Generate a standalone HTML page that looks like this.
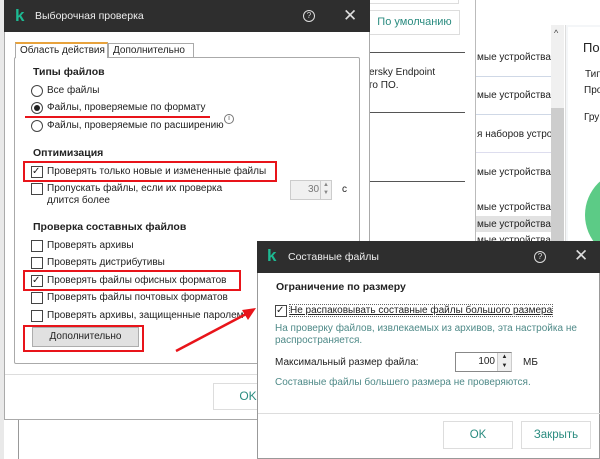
<!DOCTYPE html>
<html><head><meta charset="utf-8"><style>
*{box-sizing:border-box;margin:0;padding:0}
body{width:600px;height:459px;overflow:hidden;position:relative;background:#fff;font-family:"Liberation Sans","DejaVu Sans",sans-serif;font-size:10px;color:#222}
.a{position:absolute;white-space:nowrap}
.dark{background:#2e2e2e}
.cb{position:absolute;width:12px;height:12px;border:1px solid #444;background:#fff}
.rd{position:absolute;width:12px;height:12px;border:1px solid #444;border-radius:50%;background:#fff}
.red{position:absolute;border:2px solid #e8141a}
.b{font-weight:bold}
.teal{color:#2b8c80}
.hint{color:#4f8a88}
.t{top:1px}
</style></head><body>
<!-- background -->
<div class="a" style="left:0;top:0;width:4px;height:459px;background:#e9e9e9"></div>
<div class="a" style="left:18px;top:419px;width:1px;height:40px;background:#999"></div>
<div class="a" style="left:369px;top:0;width:90px;height:4px;border:1px solid #ddd;border-top:none"></div>
<div class="a teal" style="left:369px;top:10px;width:91px;height:25px;border:1px solid #ddd;line-height:23px;text-align:center;font-size:11px">По умолчанию</div>
<div class="a" style="left:475px;top:0;width:1px;height:459px;background:#bbb"></div>
<div class="a" style="left:369px;top:52px;width:96px;height:1px;background:#555"></div>
<div class="a" style="left:369px;top:112px;width:96px;height:1px;background:#555"></div>
<div class="a" style="left:369px;top:181px;width:96px;height:1px;background:#555"></div>
<div class="a" style="left:369px;top:66px;line-height:13px">ersky Endpoint<br>го ПО.</div>
<div class="a" style="left:476px;top:76px;width:75px;height:1px;background:#cfd8e6"></div>
<div class="a" style="left:476px;top:114px;width:75px;height:1px;background:#cfd8e6"></div>
<div class="a" style="left:476px;top:152px;width:75px;height:1px;background:#dde"></div>
<div class="a" style="left:476px;top:216px;width:75px;height:16px;background:#e2e2e2"></div>
<div class="a" style="left:477px;top:52px;width:74px;overflow:hidden">мые устройства</div>
<div class="a" style="left:477px;top:90px;width:74px;overflow:hidden">мые устройства</div>
<div class="a" style="left:477px;top:129px;width:74px;overflow:hidden">я наборов устройств</div>
<div class="a" style="left:477px;top:167px;width:74px;overflow:hidden">мые устройства</div>
<div class="a" style="left:477px;top:202px;width:74px;overflow:hidden">мые устройства</div>
<div class="a" style="left:477px;top:219px;width:74px;overflow:hidden">мые устройства</div>
<div class="a" style="left:477px;top:235px;width:74px;overflow:hidden">мые устройства</div>
<div class="a" style="left:551px;top:25px;width:13px;height:434px;background:#f0f0f0"></div>
<div class="a" style="left:551px;top:108px;width:13px;height:351px;background:#cdcdcd"></div>
<div class="a" style="left:554px;top:28px;font-size:9px;color:#444">^</div>
<div class="a" style="left:565px;top:25px;width:35px;height:434px;background:#f4f6f8;border-left:1px solid #ddd"></div>
<div class="a" style="left:568px;top:27px;width:32px;height:432px;background:#fff"></div>
<div class="a" style="left:583px;top:40px;font-size:13px">По</div>
<div class="a" style="left:585px;top:69px">Тип</div>
<div class="a" style="left:584px;top:85px">Про</div>
<div class="a" style="left:584px;top:112px">Гру</div>
<div class="a" style="left:585px;top:170px;width:90px;height:90px;border-radius:50%;background:#5ccb86"></div>

<!-- dialog 1 -->
<div class="a" style="left:4px;top:0;width:366px;height:420px;background:#fff;border:1px solid #aaa;border-top:none"></div>
<div class="a dark" style="left:4px;top:0;width:366px;height:32px"></div>
<div class="a b" style="left:15px;top:6px;font-size:17px;color:#1db992">k</div>
<div class="a" style="left:35px;top:10px;color:#eee;font-size:10.5px">Выборочная проверка</div>
<div class="a" style="left:303px;top:10px;width:12px;height:12px;border:1.3px solid #ddd;border-radius:50%;color:#ddd;font-size:8px;line-height:10px;text-align:center">?</div>
<div class="a" style="left:343px;top:6px;color:#ddd;font-size:17px">✕</div>
<div class="a" style="left:14px;top:57px;width:346px;height:307px;border:1px solid #aaa;border-radius:2px"></div>
<div class="a" style="left:15px;top:42px;width:93px;height:16px;border:1px solid #aaa;border-bottom:none;background:#fff;border-top:2px solid #e8a33d;line-height:13px;padding-left:4px">Область действия</div>
<div class="a" style="left:108px;top:43px;width:86px;height:15px;border:1px solid #aaa;background:#fff;line-height:13px;padding-left:4px">Дополнительно</div>
<div class="a b" style="left:33px;top:66px;font-size:10.5px">Типы файлов</div>
<div class="rd" style="left:31px;top:85px"></div>
<div class="a" style="left:47px;top:85px">Все файлы</div>
<div class="rd" style="left:31px;top:102px"><div style="position:absolute;left:2px;top:2px;width:6px;height:6px;border-radius:50%;background:#222"></div></div>
<div class="a" style="left:47px;top:102px">Файлы, проверяемые по формату</div>
<div class="a" style="left:25px;top:116px;width:185px;height:2px;background:#e8141a"></div>
<div class="rd" style="left:31px;top:120px"></div>
<div class="a" style="left:47px;top:120px">Файлы, проверяемые по расширению</div>
<div class="a" style="left:224px;top:114px;width:10px;height:10px;border:1px solid #777;border-radius:50%;font-size:7px;line-height:8px;text-align:center;color:#555">i</div>
<div class="a b" style="left:33px;top:147px;font-size:10.5px">Оптимизация</div>
<div class="cb" style="left:31px;top:166px;font-size:10px;line-height:9px">✓</div>
<div class="a" style="left:47px;top:166px">Проверять только новые и измененные файлы</div>
<div class="red" style="left:23px;top:161px;width:254px;height:21px"></div>
<div class="cb" style="left:31px;top:183px"></div>
<div class="a" style="left:47px;top:183px;line-height:12px">Пропускать файлы, если их проверка<br>длится более</div>
<div class="a" style="left:290px;top:180px;width:42px;height:20px;border:1px solid #ccc;background:#f0f0f0;color:#777;line-height:18px;padding-left:17px">30</div>
<div class="a" style="left:320px;top:181px;width:11px;height:18px;border-left:1px solid #ccc;font-size:6px;color:#888;line-height:8px;text-align:center">▲<br>▼</div>
<div class="a" style="left:342px;top:184px">с</div>
<div class="a b" style="left:33px;top:221px;font-size:10.5px">Проверка составных файлов</div>
<div class="cb" style="left:31px;top:240px"></div><div class="a" style="left:47px;top:240px">Проверять архивы</div>
<div class="cb" style="left:31px;top:257px"></div><div class="a" style="left:47px;top:257px">Проверять дистрибутивы</div>
<div class="cb" style="left:31px;top:275px;font-size:10px;line-height:9px">✓</div><div class="a" style="left:47px;top:275px">Проверять файлы офисных форматов</div>
<div class="red" style="left:23px;top:270px;width:218px;height:21px"></div>
<div class="cb" style="left:31px;top:292px"></div><div class="a" style="left:47px;top:292px">Проверять файлы почтовых форматов</div>
<div class="cb" style="left:31px;top:310px"></div><div class="a" style="left:47px;top:310px">Проверять архивы, защищенные паролем</div>
<div class="a" style="left:32px;top:327px;width:107px;height:20px;background:#e1e1e1;border:1px solid #adadad;text-align:center;line-height:18px">Дополнительно</div>
<div class="red" style="left:23px;top:325px;width:121px;height:27px"></div>
<div class="a" style="left:5px;top:374px;width:364px;height:1px;background:#ddd"></div>
<div class="a teal" style="left:213px;top:383px;width:70px;height:27px;border:1px solid #ddd;font-size:12px;line-height:25px;text-align:center">OK</div>
<svg class="a" style="left:170px;top:300px" width="95" height="56"><line x1="6" y1="51" x2="78" y2="13" stroke="#e8141a" stroke-width="2.5"/><polygon points="86,8 72,10 78,20" fill="#e8141a"/></svg>

<!-- dialog 2 -->
<div class="a" style="left:257px;top:241px;width:343px;height:218px;background:#fff;border:1px solid #999"></div>
<div class="a dark" style="left:257px;top:241px;width:343px;height:32px"></div>
<div class="a b" style="left:267px;top:246px;font-size:17px;color:#1db992">k</div>
<div class="a" style="left:288px;top:251px;color:#eee;font-size:10.5px">Составные файлы</div>
<div class="a" style="left:534px;top:251px;width:12px;height:12px;border:1.3px solid #ddd;border-radius:50%;color:#ddd;font-size:8px;line-height:10px;text-align:center">?</div>
<div class="a" style="left:574px;top:246px;color:#ddd;font-size:17px">✕</div>
<div class="a b" style="left:276px;top:281px;font-size:10.5px">Ограничение по размеру</div>
<div class="cb" style="left:275px;top:305px;font-size:10px;line-height:9px">✓</div>
<div class="a" style="left:290px;top:305px;text-decoration:underline;outline:1px dotted #666">Не распаковывать составные файлы большого размера</div>
<div class="a hint" style="left:275px;top:323px;line-height:12px">На проверку файлов, извлекаемых из архивов, эта настройка не<br>распространяется.</div>
<div class="a" style="left:275px;top:357px">Максимальный размер файла:</div>
<div class="a" style="left:455px;top:352px;width:57px;height:20px;border:1px solid #888;border-right-color:#ccc;text-align:right;padding-right:16px;line-height:18px">100</div>
<div class="a" style="left:497px;top:353px;width:14px;height:18px;background:#eee;border-left:1px solid #ccc;font-size:6px;line-height:9px;text-align:center">▲<br>▼</div>
<div class="a" style="left:523px;top:357px">МБ</div>
<div class="a hint" style="left:275px;top:377px">Составные файлы большего размера не проверяются.</div>
<div class="a" style="left:258px;top:413px;width:342px;height:1px;background:#ddd"></div>
<div class="a teal" style="left:443px;top:421px;width:70px;height:28px;border:1px solid #ddd;font-size:11.5px;line-height:26px;text-align:center">OK</div>
<div class="a teal" style="left:521px;top:421px;width:70px;height:28px;border:1px solid #ddd;font-size:11.5px;line-height:26px;text-align:center">Закрыть</div>
</body></html>
